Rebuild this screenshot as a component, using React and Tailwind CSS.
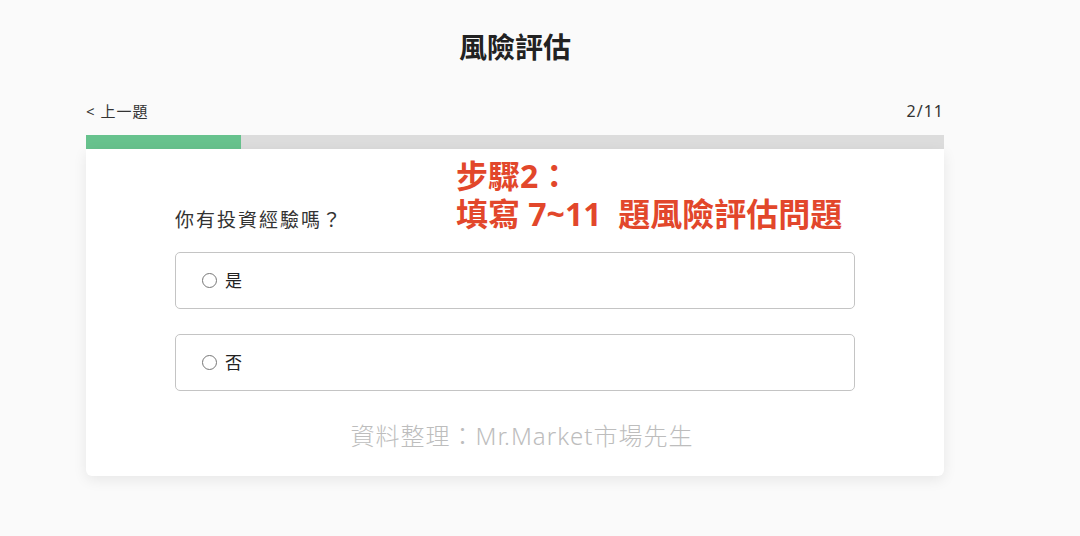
import React from "react";

const cjk = "font-['Noto_Sans','Noto_Sans_CJK_TC',sans-serif]";

function Option({ label }) {
  return (
    <div className="flex items-center h-[57px] border border-[#c4c4c4] rounded-[5px] pl-[26px] bg-white">
      <span className="w-[15px] h-[15px] rounded-full border border-[#777] mr-[8px]" />
      <span className="text-[17px] text-[#222]">{label}</span>
    </div>
  );
}

export default function App() {
  return (
    <div className={`min-h-screen bg-[#fafafa] ${cjk}`}>
      <div className="ml-[86px] w-[858px] pt-[28px]">
        <h1 className="text-center text-[28px] leading-[38px] font-bold text-[#222]">
          風險評估
        </h1>

        <div className="flex justify-between items-center mt-[35px] text-[15px] leading-[20px] text-[#333]">
          <span className="tracking-[1px]">&lt; 上一題</span>
          <span className="text-[16px] tracking-[1px]">2/11</span>
        </div>

        {/* progress */}
        <div className="mt-[14px] h-[14px] bg-[#dcdcdc]">
          <div className="h-full w-[155px] bg-[#67c28d]" />
        </div>

        {/* card */}
        <div className="relative bg-white rounded-b-[6px] shadow-[0_4px_14px_rgba(0,0,0,0.08)] px-[89px] pt-[57px] pb-[24px]">
          <p className="text-[19px] leading-[28px] tracking-[2px] text-[#333]">你有投資經驗嗎？</p>
          <div className="mt-[18px] flex flex-col gap-[25px]">
            <Option label="是" />
            <Option label="否" />
          </div>
          <p className="mt-[29px] text-center text-[24px] leading-[32px] tracking-[1px] font-light text-[#bdbdbd] pl-[14px]">
            資料整理：Mr.Market市場先生
          </p>

          {/* annotation overlay */}
          <div className="absolute left-[370px] top-[8px] text-[#e2472b] font-bold text-[32px] leading-[38px] whitespace-pre">
            <div>步驟2：</div>
            <div>填寫 7~11  題風險評估問題</div>
          </div>
        </div>
      </div>
    </div>
  );
}
